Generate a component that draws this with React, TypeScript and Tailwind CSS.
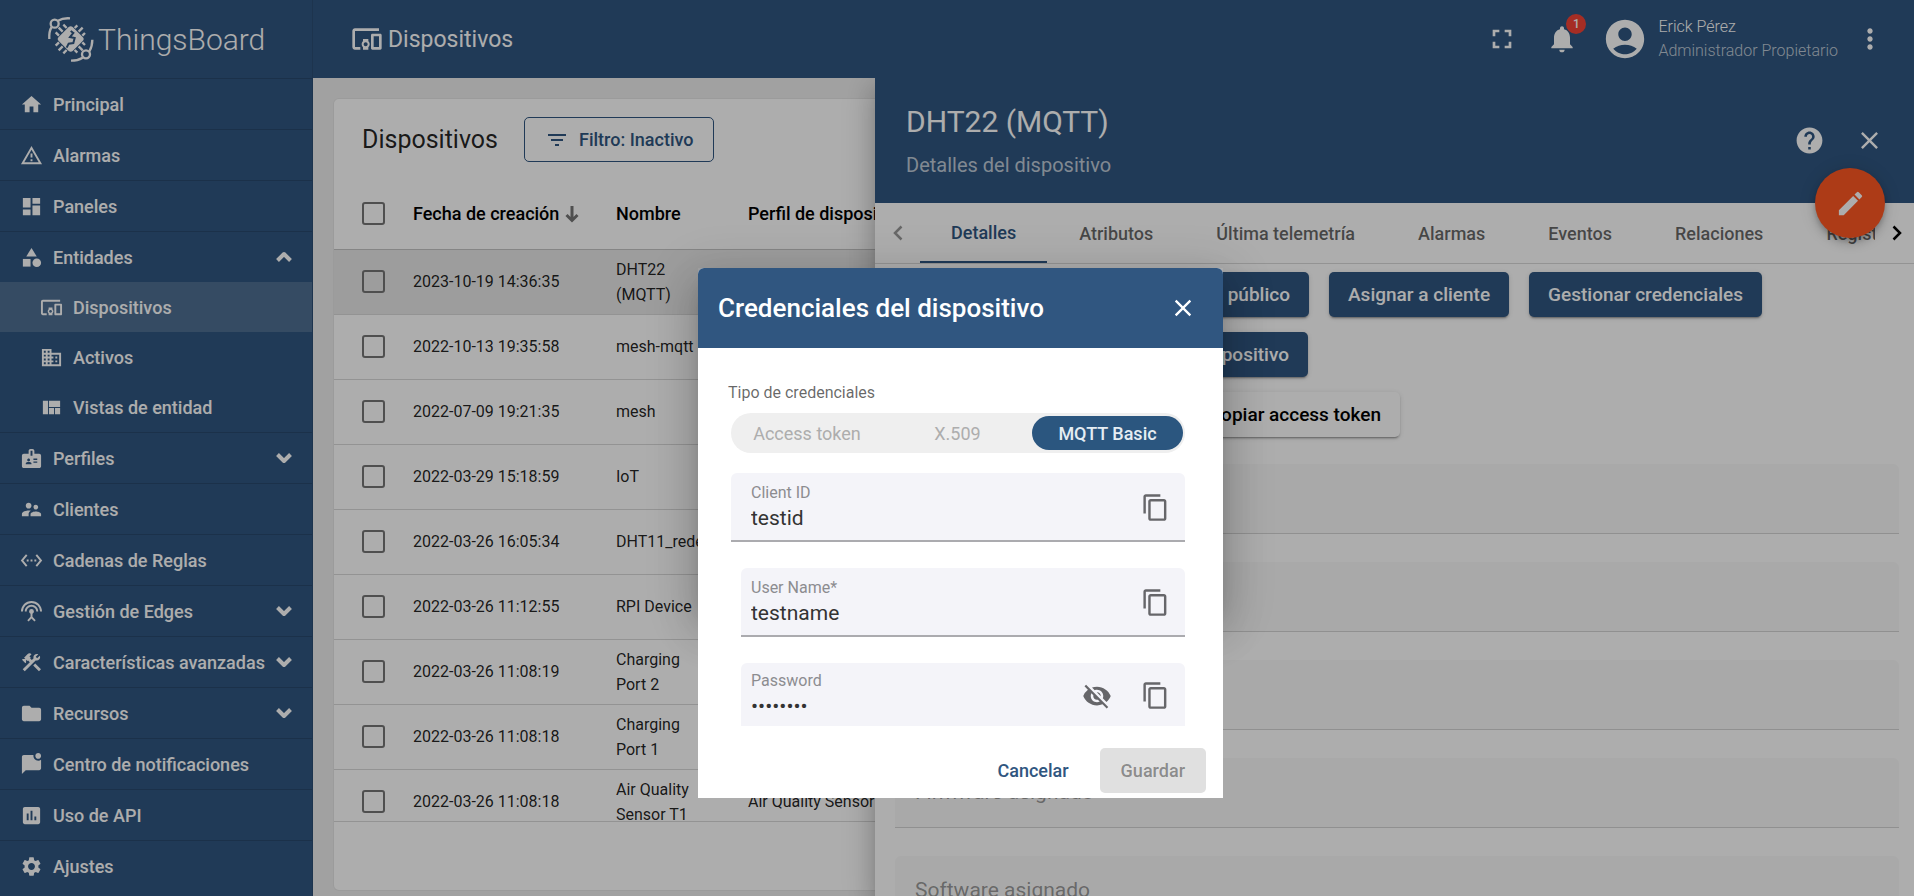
import type { ReactNode } from "react";
import {
  MdHome, MdOutlineWarningAmber, MdDashboard, MdCategory, MdDevicesOther, MdDomain, MdViewQuilt,
  MdBadge, MdSupervisorAccount, MdSettingsEthernet, MdSettingsInputAntenna, MdConstruction,
  MdFolder, MdMarkChatUnread, MdInsertChart, MdSettings, MdFilterList, MdFullscreen,
  MdNotifications, MdAccountCircle, MdMoreVert, MdHelp, MdClose, MdEdit, MdContentCopy,
  MdVisibilityOff, MdContentPaste,
} from "react-icons/md";
import type { IconType } from "react-icons";

type NavItem = { label: string; icon: IconType; chevron?: "up" | "down"; children?: NavItem[]; active?: boolean };

const nav: NavItem[] = [
  { label: "Principal", icon: MdHome },
  { label: "Alarmas", icon: MdOutlineWarningAmber },
  { label: "Paneles", icon: MdDashboard },
  {
    label: "Entidades", icon: MdCategory, chevron: "up",
    children: [
      { label: "Dispositivos", icon: MdDevicesOther, active: true },
      { label: "Activos", icon: MdDomain },
      { label: "Vistas de entidad", icon: MdViewQuilt },
    ],
  },
  { label: "Perfiles", icon: MdBadge, chevron: "down" },
  { label: "Clientes", icon: MdSupervisorAccount },
  { label: "Cadenas de Reglas", icon: MdSettingsEthernet },
  { label: "Gestión de Edges", icon: MdSettingsInputAntenna, chevron: "down" },
  { label: "Características avanzadas", icon: MdConstruction, chevron: "down" },
  { label: "Recursos", icon: MdFolder, chevron: "down" },
  { label: "Centro de notificaciones", icon: MdMarkChatUnread },
  { label: "Uso de API", icon: MdInsertChart },
  { label: "Ajustes", icon: MdSettings },
];

const devices = [
  ["2023-10-19 14:36:35", "DHT22 (MQTT)", "default"],
  ["2022-10-13 19:35:58", "mesh-mqtt", "default"],
  ["2022-07-09 19:21:35", "mesh", "default"],
  ["2022-03-29 15:18:59", "IoT", "default"],
  ["2022-03-26 16:05:34", "DHT11_redes", "default"],
  ["2022-03-26 11:12:55", "RPI Device", "default"],
  ["2022-03-26 11:08:19", "Charging Port 2", "Charging port"],
  ["2022-03-26 11:08:18", "Charging Port 1", "Charging port"],
  ["2022-03-26 11:08:18", "Air Quality Sensor T1", "Air Quality Sensor"],
];

const tabs = ["Detalles", "Atributos", "Última telemetría", "Alarmas", "Eventos", "Relaciones", "Registros de auditoría"];

function Logo() {
  return (
    <svg viewBox="21 21 141 141" className="size-[47px] shrink-0" fill="none" stroke="currentColor" aria-hidden="true">
      <g strokeWidth="7">
        <circle cx="44" cy="44" r="12" />
        <path d="M54 35C64 29 76 27 90 28M35 54C29 63 27 74 28 90" />
        <circle cx="138" cy="136" r="12" />
        <path d="M128 146C118 152 107 155 93 155M148 127C154 117 157 106 157 92" />
      </g>
      <g strokeWidth="7">
        <path d="M68 68L56 56M80 57L70 47M57 80L47 70" />
        <path d="M116 68L128 56M104 57L112 49M127 80L135 72" />
        <path d="M116 112L128 124M104 123L112 131M127 100L135 108" />
        <path d="M68 112L56 124M80 123L70 133M57 100L47 110" />
      </g>
      <path d="M86 54Q92 49 98 54L128 84Q134 90 128 96L98 126Q92 131 86 126L56 96Q50 90 56 84Z" fill="currentColor" stroke="none" />
      <path d="M92 66L100 72L90 84L104 87L100 102L86 104L80 116" stroke="#305680" strokeWidth="6" />
    </svg>
  );
}

function Chevron({ up }: { up?: boolean }) {
  return (
    <svg viewBox="0 0 16 12" className="h-3 w-4 shrink-0" fill="none" stroke="currentColor" strokeWidth="4" aria-hidden="true">
      <path d={up ? "M1.500 9.500L8 3L14.500 9.500" : "M1.500 2.500L8 9L14.500 2.500"} strokeLinejoin="round" />
    </svg>
  );
}

function Sidebar() {
  return (
    <aside className="flex w-[313px] shrink-0 flex-col border-r border-black/10 bg-[#305680] text-white">
      <div className="flex h-[78px] items-center gap-1 pl-[47px]">
        <Logo />
        <span className="text-[30px] font-light">ThingsBoard</span>
      </div>
      <nav>
        <ul>
          {nav.map((n) => (
            <li key={n.label} className="border-t border-black/15">
              <a href="#" className="flex h-[50px] items-center px-5 text-[18px] font-medium">
                <n.icon className="mr-[10px] size-[23px] shrink-0" />
                <span className="flex-1 whitespace-nowrap">{n.label}</span>
                {n.chevron && <Chevron up={n.chevron === "up"} />}
              </a>
              {n.children && (
                <ul>
                  {n.children.map((c) => (
                    <li key={c.label}>
                      <a href="#" className={`flex h-[50px] items-center gap-[10px] pl-10 text-[18px] font-medium ${c.active ? "bg-white/15" : ""}`}>
                        <c.icon className="size-[23px] shrink-0" />
                        {c.label}
                      </a>
                    </li>
                  ))}
                </ul>
              )}
            </li>
          ))}
        </ul>
      </nav>
    </aside>
  );
}

function TopBar() {
  return (
    <header className="relative z-10 flex h-[78px] shrink-0 items-center bg-[#305680] pl-[38px] pr-7 text-white">
      <MdDevicesOther className="mr-[5px] size-8" />
      <h1 className="flex-1 pt-0.5 text-[23px]">Dispositivos</h1>
      <button type="button" aria-label="Pantalla completa" className="mr-7"><MdFullscreen className="size-8" /></button>
      <button type="button" aria-label="Notificaciones" className="relative mr-6">
        <MdNotifications className="size-8" />
        <span className="absolute -top-[9px] left-5 flex size-5 items-center justify-center rounded-full bg-[#f44336] text-[12px] font-medium">1</span>
      </button>
      <MdAccountCircle className="mr-[10px] size-[46px]" />
      <div className="mr-4 text-[16px] font-light leading-[24px]">
        <div>Erick Pérez</div>
        <div className="text-white/70">Administrador Propietario</div>
      </div>
      <button type="button" aria-label="Más"><MdMoreVert className="size-8" /></button>
    </header>
  );
}

function Check({ label }: { label: string }) {
  return <input type="checkbox" aria-label={label} className="block size-[23px] appearance-none rounded-[3px] border-2 border-[#757575] bg-transparent" />;
}

function DeviceList() {
  return (
    <section className="flex h-full flex-col overflow-hidden rounded-md border border-black/10 bg-white text-black/87">
      <div className="flex items-center gap-[26px] px-7 pb-10 pt-[18px]">
        <h2 className="text-[25px] leading-[44px]">Dispositivos</h2>
        <button type="button" className="flex h-[45px] items-center gap-[10px] rounded-[5px] border border-[#305680] px-5 text-[18px] font-medium text-[#305680]">
          <MdFilterList className="size-6" />
          Filtro: Inactivo
        </button>
      </div>
      <div className="h-[620px] shrink-0 overflow-hidden border-b border-black/15">
        <table className="w-[1500px] table-fixed text-left text-[16px]">
          <colgroup>
            <col className="w-[79px]" /><col className="w-[203px]" /><col className="w-[132px]" /><col />
          </colgroup>
          <thead>
            <tr className="h-[47px] align-top text-[18px] text-black">
              <th className="pl-7"><Check label="Seleccionar todo" /></th>
              <th className="font-medium">
                <span className="flex items-center gap-[6px] leading-[23px]">
                  Fecha de creación
                  <svg viewBox="0 0 14 18" className="h-[18px] w-3.5" fill="none" stroke="#757575" strokeWidth="3" aria-hidden="true">
                    <path d="M7 1v14M1.500 10L7 15.500L12.500 10" />
                  </svg>
                </span>
              </th>
              <th className="font-medium leading-[23px]">Nombre</th>
              <th className="font-medium leading-[23px]">Perfil de dispositivo</th>
            </tr>
          </thead>
          <tbody>
            {devices.map(([date, name, profile], i) => (
              <tr key={name} className={`h-[65px] border-t border-black/15 ${i === 0 ? "bg-[#e8e8e8]" : ""}`}>
                <td className="pl-7"><Check label={name} /></td>
                <td>{date}</td>
                <td className="pr-12 leading-[25px]">{name}</td>
                <td>{profile}</td>
              </tr>
            ))}
          </tbody>
        </table>
      </div>
    </section>
  );
}

function Btn({ children, light, grow }: { children: ReactNode; light?: boolean; grow?: boolean }) {
  return (
    <button
      type="button"
      className={`flex h-[45px] items-center justify-center gap-2 overflow-hidden whitespace-nowrap rounded-[5px] px-[19px] pt-0.5 text-[19px] font-medium shadow-[0_3px_1px_-2px_rgba(0,0,0,.2),0_2px_2px_rgba(0,0,0,.14),0_1px_5px_rgba(0,0,0,.12)] ${light ? "bg-white text-black" : "bg-[#305680] text-white"} ${grow ? "min-w-0 flex-1" : ""}`}
    >
      {children}
    </button>
  );
}

function DetailsDrawer() {
  return (
    <section className="absolute bottom-0 left-[562px] right-0 top-[78px] flex flex-col bg-white shadow-[0_8px_10px_-5px_rgba(0,0,0,.2),0_16px_24px_2px_rgba(0,0,0,.14),0_6px_30px_5px_rgba(0,0,0,.12)]">
      <header className="flex h-[125px] shrink-0 items-center bg-[#305680] pl-[31px] pr-[30px] text-white">
        <div className="flex-1 pt-1">
          <h2 className="text-[30px] leading-[44px]">DHT22 (MQTT)</h2>
          <p className="text-[20px] leading-[42px] text-white/70">Detalles del dispositivo</p>
        </div>
        <button type="button" aria-label="Ayuda" className="mr-[30px]"><MdHelp className="size-[31px]" /></button>
        <button type="button" aria-label="Cerrar"><MdClose className="size-[29px]" /></button>
      </header>
      <button type="button" aria-label="Editar" className="absolute right-[29px] top-[90px] flex size-[70px] items-center justify-center rounded-full bg-[#ff5722] text-white shadow-[0_3px_5px_-1px_rgba(0,0,0,.2),0_6px_10px_rgba(0,0,0,.14),0_1px_18px_rgba(0,0,0,.12)]">
        <MdEdit className="size-[31px]" />
      </button>
      <div className="flex h-[61px] shrink-0 items-stretch border-b border-black/15">
        <button type="button" aria-label="Anterior" className="flex w-[45px] shrink-0 items-center justify-center text-black/40">
          <svg viewBox="0 0 10 16" className="h-4 w-2.5" fill="none" stroke="currentColor" strokeWidth="2.500"><path d="M8.500 1.500L2 8l6.500 6.500" /></svg>
        </button>
        <div role="tablist" className="flex min-w-0 flex-1 gap-px overflow-hidden">
          {tabs.map((t, i) => (
            <button key={t} type="button" role="tab" aria-selected={i === 0} className={`whitespace-nowrap px-[31px] text-[18px] font-medium ${i === 0 ? "border-b-2 border-[#305680] text-[#305680]" : "text-black/60"}`}>
              {t}
            </button>
          ))}
        </div>
        <button type="button" aria-label="Siguiente" className="flex w-[39px] shrink-0 items-center justify-center pl-1 text-black">
          <svg viewBox="0 0 10 16" className="h-4 w-2.5" fill="none" stroke="currentColor" strokeWidth="2.500"><path d="M1.500 1.500L8 8l-6.500 6.500" /></svg>
        </button>
      </div>
      <div className="flex flex-col gap-[15px] px-5 pt-2">
        <div className="flex gap-5">
          <div className="flex w-[414px] gap-5"><Btn grow>Abrir detalles</Btn><Btn><span>Hacer</span><span>público</span></Btn></div>
          <Btn>Asignar a cliente</Btn>
          <Btn>Gestionar credenciales</Btn>
        </div>
        <div className="flex w-[413px] gap-5"><Btn grow>Conectividad</Btn><Btn>Borrar dispositivo</Btn></div>
        <div className="flex w-[505px] gap-5">
          <Btn light grow><MdContentPaste className="size-6" />Copiar ID</Btn>
          <Btn light><MdContentPaste className="size-6" />Copiar access token</Btn>
        </div>
      </div>
      <div className="flex min-h-0 flex-1 flex-col gap-7 overflow-hidden pl-5 pr-[15px] pt-[27px]">
        {["", "", "", "Firmware asignado", "Software asignado"].map((f, i) => (
          <div key={i} className="flex h-[70px] shrink-0 items-center rounded-t-md border-b border-black/15 bg-black/[.025] px-5 text-[21px] text-black/40">{f}</div>
        ))}
      </div>
    </section>
  );
}

function Field({ id, label, value, type = "text", wide, last }: { id: string; label: string; value: string; type?: string; wide?: boolean; last?: boolean }) {
  return (
    <div className={`flex items-center rounded-t-md bg-[#f4f4f9] pr-[15px] pt-0.5 ${wide ? "pl-5" : "ml-[10px] pl-[10px]"} ${last ? "h-[63px]" : "h-[69px] border-b-2 border-[#ababaf]"}`}>
      <div className="flex min-w-0 flex-1 flex-col">
        <label htmlFor={id} className="text-[16px] leading-[22px] text-[#8c8c90]">{label}</label>
        <input id={id} type={type} defaultValue={value} className="h-[30px] w-full bg-transparent text-[21px] text-[#333] outline-none" />
      </div>
      {type === "password" && <button type="button" aria-label="Mostrar" className="mr-[29px] text-[#66666a]"><MdVisibilityOff className="size-[30px]" /></button>}
      <button type="button" aria-label="Copiar" className="text-[#66666a]"><MdContentCopy className="size-[29px]" /></button>
    </div>
  );
}

function CredentialsDialog() {
  return (
    <div role="dialog" aria-labelledby="dlg" className="relative w-[525px]">
      <div className="absolute inset-x-0 bottom-[190px] top-0 shadow-[0_11px_15px_-7px_rgba(0,0,0,.2),0_24px_38px_3px_rgba(0,0,0,.14),0_9px_46px_8px_rgba(0,0,0,.12)]" />
      <div className="relative overflow-hidden rounded-t-md bg-white">
        <header className="flex h-20 items-center justify-between bg-[#305680] pl-5 pr-[26px] text-white">
          <h2 id="dlg" className="text-[26px] font-medium">Credenciales del dispositivo</h2>
          <button type="button" aria-label="Cerrar"><MdClose className="size-7" /></button>
        </header>
        <form className="pl-[30px] pr-[38px] pt-[33px]">
          <p className="text-[16px] leading-6 text-black/60">Tipo de credenciales</p>
          <div className="ml-[3px] mt-2 flex h-10 items-center rounded-full bg-[#efefef] pr-[2px] text-[18px] text-[#adadad]">
            <button type="button" className="w-[152px]">Access token</button>
            <button type="button" className="flex-1">X.509</button>
            <button type="button" className="h-[34px] w-[151px] rounded-full bg-[#2b567f] font-medium text-[#e5edf3]">MQTT Basic</button>
          </div>
          <div className="ml-[3px] mt-5 flex flex-col gap-[26px]">
            <Field id="client" label="Client ID" value="testid" wide />
            <Field id="user" label="User Name*" value="testname" />
            <Field id="pass" label="Password" value="password" type="password" last />
          </div>
        </form>
        <footer className="flex justify-end gap-[10px] px-[17px] pb-[5px] pt-[22px] text-[18px] font-medium">
          <button type="button" className="h-[45px] px-[21px] text-[#305680]">Cancelar</button>
          <button type="button" disabled className="h-[45px] rounded-[5px] bg-[#e0e0e0] px-[21px] text-black/40">Guardar</button>
        </footer>
      </div>
    </div>
  );
}

export default function App() {
  return (
    <div className="relative flex h-screen overflow-hidden bg-[#eee] font-['Roboto',sans-serif]">
      <Sidebar />
      <div className="relative isolate flex min-w-0 flex-1 flex-col">
        <TopBar />
        <main className="min-h-0 flex-1 p-5 pb-[5px]"><DeviceList /></main>
        <DetailsDrawer />
      </div>
      <div className="absolute inset-0 z-20 flex items-start justify-center bg-black/32 pl-[7px] pt-[268px]">
        <CredentialsDialog />
      </div>
    </div>
  );
}
